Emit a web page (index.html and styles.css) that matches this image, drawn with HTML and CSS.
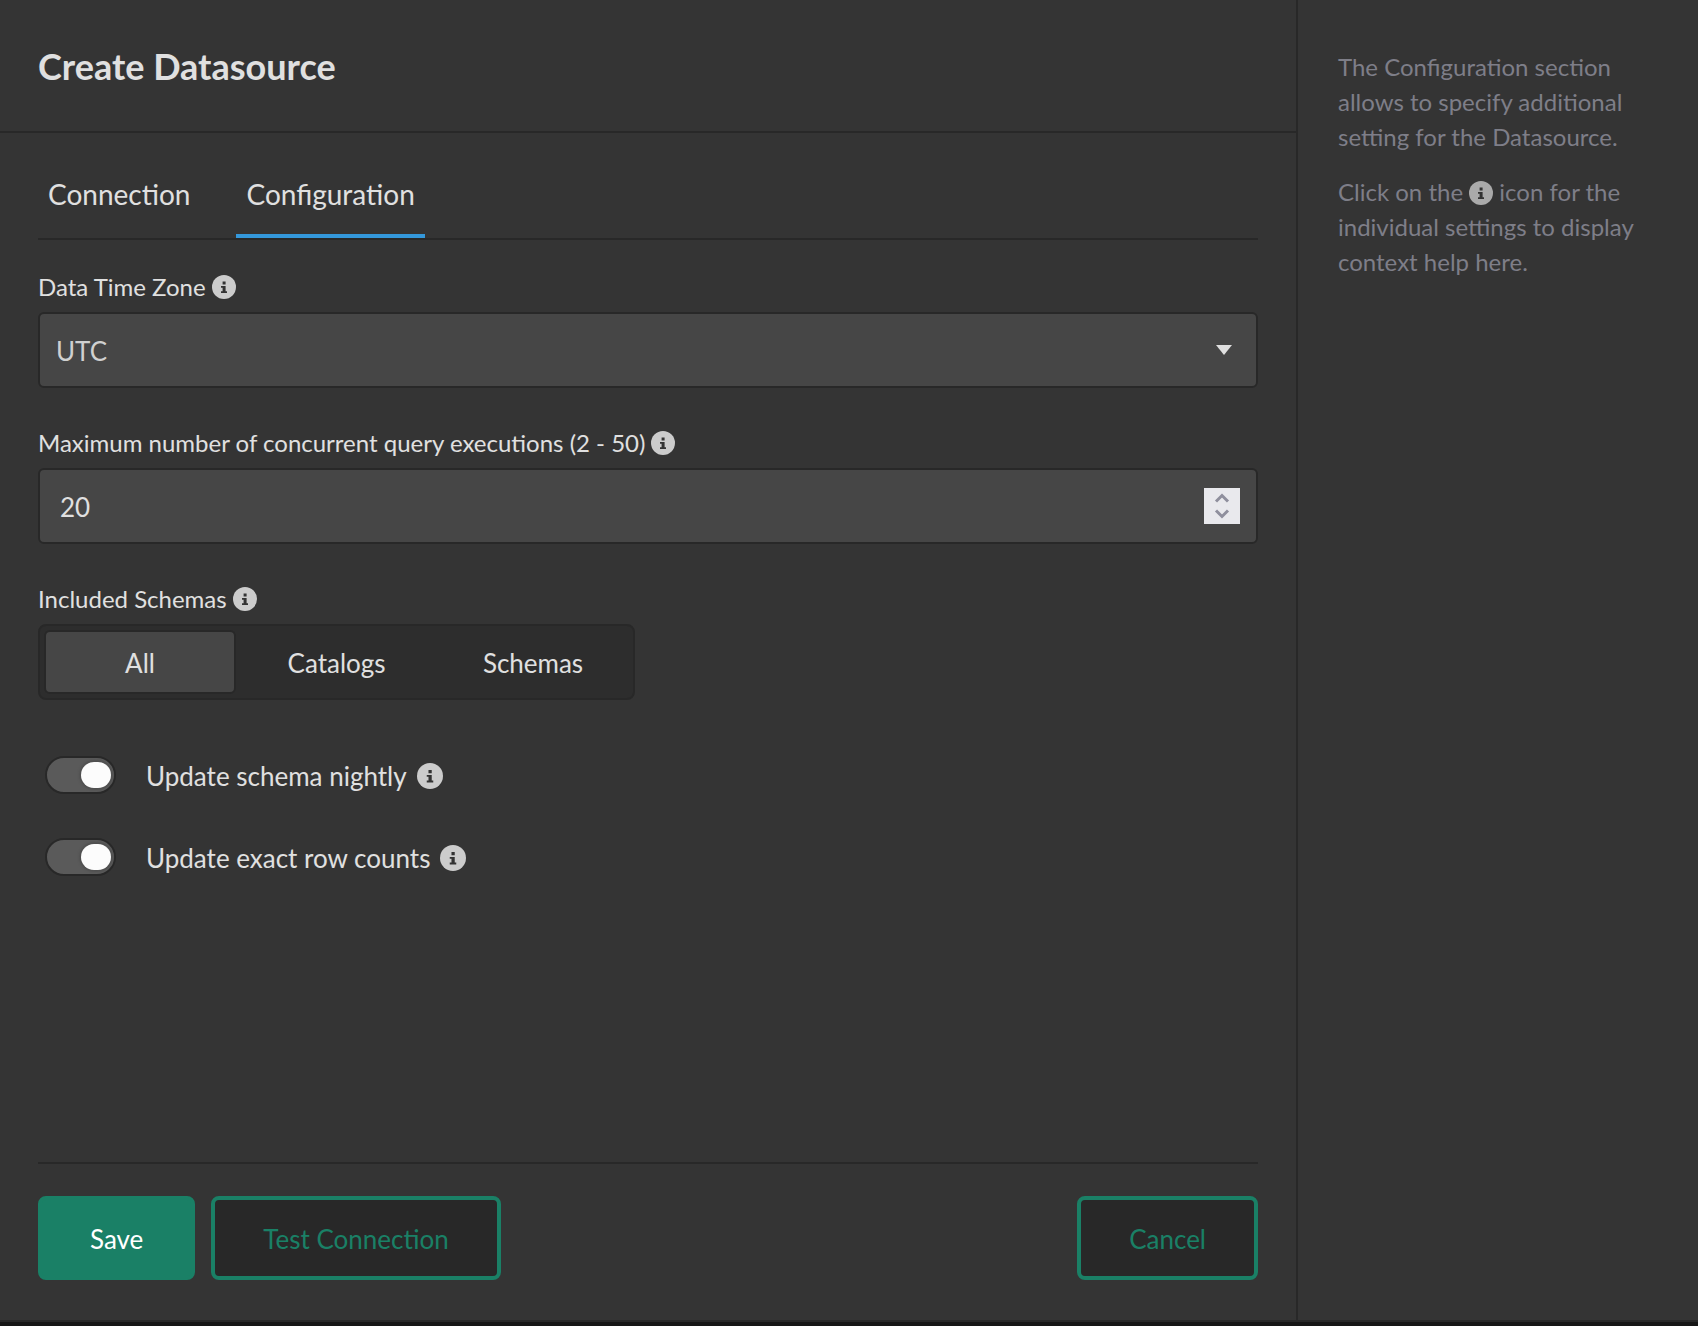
FILE: index.html
```html
<!DOCTYPE html>
<html lang="en">
	<head>
		<meta charset="utf-8">
		<title>Create Datasource</title>
		<link rel="stylesheet" href="styles.css">
	</head>
	<body>
		<svg class="sprite" aria-hidden="true">
			<symbol id="info" viewBox="0 0 24 24">
				<circle cx="12" cy="12" r="12" fill="currentColor"/>
				<path fill="#333" d="M10.6 6.5h3v3h-3zM9 11h4.6v5.2H15V18H9v-1.800h1.600v-3.400H9z"/>
			</symbol>
		</svg>

		<div class="dialog">
			<main class="main">
				<header class="header">
					<h1>Create Datasource</h1>
				</header>

				<form class="form">
					<nav class="tabs">
						<a href="#connection">Connection</a>
						<a href="#configuration" class="active">Configuration</a>
					</nav>

					<div class="field">
						<div class="label">
							<label for="timezone">Data Time Zone</label>
							<svg class="info"><use href="#info"/></svg>
						</div>
						<div class="control">
							<select id="timezone">
								<option>UTC</option>
							</select>
							<svg class="caret" viewBox="0 0 16 10"><path fill="currentColor" d="M0 0h16l-8 10z"/></svg>
						</div>
					</div>

					<div class="field">
						<div class="label">
							<label for="max">Maximum number of concurrent query executions (2 - 50)</label>
							<svg class="info"><use href="#info"/></svg>
						</div>
						<div class="control">
							<input id="max" type="number" min="2" max="50" value="20">
							<svg class="spinner" viewBox="0 0 36 36">
								<path d="M12 13.500l6-6 6 6M12 22.500l6 6 6-6"/>
							</svg>
						</div>
					</div>

					<div class="field">
						<div class="label">
							<span id="schemas-label">Included Schemas</span>
							<svg class="info"><use href="#info"/></svg>
						</div>
						<div class="segments" role="radiogroup" aria-labelledby="schemas-label">
							<label><input type="radio" name="schemas" checked><span>All</span></label>
							<label><input type="radio" name="schemas"><span>Catalogs</span></label>
							<label><input type="radio" name="schemas"><span>Schemas</span></label>
						</div>
					</div>

					<div class="toggles">
						<div class="toggle">
							<input id="nightly" type="checkbox" checked>
							<label for="nightly">Update schema nightly</label>
							<svg class="info"><use href="#info"/></svg>
						</div>
						<div class="toggle">
							<input id="counts" type="checkbox" checked>
							<label for="counts">Update exact row counts</label>
							<svg class="info"><use href="#info"/></svg>
						</div>
					</div>

					<footer class="actions">
						<button type="submit" class="primary">Save</button>
						<button type="button">Test Connection</button>
						<button type="button" class="cancel">Cancel</button>
					</footer>
				</form>
			</main>

			<aside class="help">
				<p>The Configuration section allows to specify additional setting for the Datasource.</p>
				<p>Click on the <svg class="info"><use href="#info"/></svg> icon for the individual settings to display context help here.</p>
			</aside>
		</div>
	</body>
</html>
```
FILE: styles.css
```css
* {
	box-sizing: border-box;
}

body {
	margin: 0;
	height: 100vh;
	padding-bottom: 4px;
	background: #161616;
	color: #e0e0e0;
	font-family: Lato, sans-serif;
	font-size: 24px;
	line-height: 36px;
	overflow: hidden;
}

.sprite {
	position: absolute;
	width: 0;
	height: 0;
}

.dialog {
	display: flex;
	height: 100%;
	background: #343434;
	border-bottom: 2px solid #282828;
}

.main {
	flex: 1;
	display: flex;
	flex-direction: column;
}

.header {
	padding: 42px 38px 41px;
	border-bottom: 2px solid #282828;
}

h1 {
	margin: 0;
	font-size: 36px;
	line-height: 48px;
	font-weight: bold;
}

.form {
	flex: 1;
	display: flex;
	flex-direction: column;
	padding: 22px 38px 40px;
}

.tabs {
	display: flex;
	gap: 36px;
	border-bottom: 2px solid #282828;
	margin-bottom: 29px;
}

.tabs a {
	padding: 19px 10px 20px;
	border-bottom: 4px solid transparent;
	color: inherit;
	font-size: 28px;
	line-height: 40px;
	text-decoration: none;
}

.tabs .active {
	border-color: #3498db;
}

.field {
	margin-bottom: 37px;
}

.label {
	display: flex;
	align-items: center;
	gap: 6px;
	height: 36px;
	margin-bottom: 7px;
}

.info {
	width: 24px;
	height: 24px;
	color: #ccc;
}

.control {
	position: relative;
}

.control select,
.control input {
	display: block;
	appearance: none;
	-moz-appearance: textfield;
	width: 100%;
	height: 76px;
	padding: 2px 16px 0;
	border: 2px solid #282828;
	border-radius: 6px;
	background: #464646;
	color: inherit;
	font: inherit;
	font-size: 26px;
}

.control select {
	color: #d0d0d0;
}

.control input {
	padding: 2px 20px 0;
}

.control input::-webkit-inner-spin-button {
	appearance: none;
}

.caret {
	position: absolute;
	top: 33px;
	right: 26px;
	width: 16px;
	height: 10px;
	pointer-events: none;
}

.spinner {
	position: absolute;
	top: 20px;
	right: 18px;
	width: 36px;
	height: 36px;
	background: #e9e9ed;
	fill: none;
	stroke: #8f8f9d;
	stroke-width: 3;
	pointer-events: none;
}

.segments {
	display: inline-grid;
	grid-template-columns: 192px 201px 192px;
	height: 76px;
	padding: 4px;
	border: 2px solid #282828;
	border-radius: 8px;
	background: #2d2d2d;
	font-size: 26px;
}

.segments input {
	position: absolute;
	opacity: 0;
}

.segments label,
.segments span {
	display: grid;
	place-items: center;
	border-radius: 6px;
}

.segments label {
	place-items: stretch;
}

.segments span {
	padding-top: 2px;
	border: 2px solid transparent;
}

.segments :checked + span {
	border-color: #282828;
	background: #464646;
}

.toggles {
	display: grid;
	gap: 44px;
	padding: 19px 7px 0;
	font-size: 26px;
}

.toggle {
	display: flex;
	align-items: center;
	height: 38px;
}

.toggle input {
	appearance: none;
	width: 71px;
	height: 38px;
	margin: 0 30px 0 0;
	padding: 4px 3px;
	border: 2px solid #282828;
	border-radius: 19px;
	background: #5a5a5a;
}

.toggle input::before {
	content: "";
	display: block;
	width: 30px;
	height: 26px;
	margin-left: auto;
	border-radius: 13px;
	background: #fcfcfc;
	box-shadow: 0 0 2px 2px #505050;
}

.toggle label {
	margin-top: 2px;
}

.toggle .info {
	width: 26px;
	height: 26px;
	margin-top: 2px;
	margin-left: 10px;
}

.actions {
	display: flex;
	gap: 16px;
	margin-top: auto;
	padding-top: 32px;
	border-top: 2px solid #282828;
}

.actions button {
	height: 84px;
	padding: 2px 48px 0;
	border: 4px solid #1a8066;
	border-radius: 8px;
	background: #282828;
	color: #1a8066;
	font: inherit;
	font-size: 26px;
}

.actions .primary {
	background: #1a8066;
	color: #fff;
}

.actions .cancel {
	margin-left: auto;
}

.help {
	width: 402px;
	padding: 49px 40px;
	border-left: 2px solid #282828;
	color: #7e7e88;
	line-height: 35px;
}

.help p {
	margin: 0 0 20px;
}

.help .info {
	color: #aaa;
	vertical-align: -4px;
}
```
